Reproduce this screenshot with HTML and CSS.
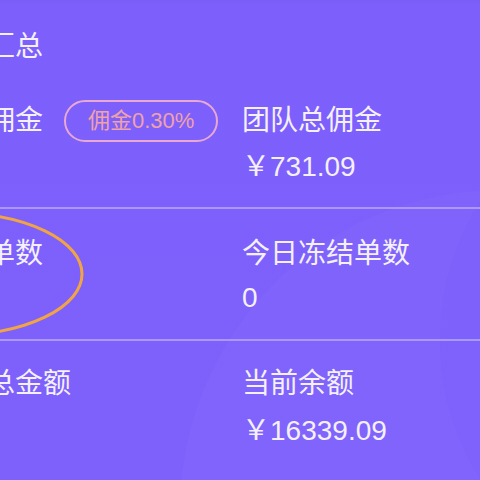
FILE: index.html
```html
<!DOCTYPE html>
<html lang="zh-CN">
<head>
<meta charset="utf-8">
<title>数据汇总</title>
<link rel="stylesheet" href="styles.css">
</head>
<body>
<div class="screen">
  <div class="deco deco-a"></div>
  <div class="deco deco-b"></div>
  <div class="card">
    <div class="title">数据汇总</div>
    <div class="row row-first">
      <div class="cell">
        <div class="label-line">
          <span class="label">今日佣金</span>
          <span class="badge">佣金0.30%</span>
        </div>
        <div class="value"></div>
      </div>
      <div class="cell">
        <div class="label-line"><span class="label">团队总佣金</span></div>
        <div class="value"><span class="yen">￥</span>731.09</div>
      </div>
    </div>
    <div class="row">
      <div class="cell">
        <div class="label-line"><span class="label">今日单数</span></div>
        <div class="value"></div>
      </div>
      <div class="cell">
        <div class="label-line"><span class="label">今日冻结单数</span></div>
        <div class="value">0</div>
      </div>
    </div>
    <div class="row row-last">
      <div class="cell">
        <div class="label-line"><span class="label">累计总金额</span></div>
        <div class="value"></div>
      </div>
      <div class="cell">
        <div class="label-line"><span class="label">当前余额</span></div>
        <div class="value"><span class="yen">￥</span>16339.09</div>
      </div>
    </div>
  </div>
  <svg class="mark" width="480" height="480" viewBox="0 0 480 480">
    <ellipse cx="-45" cy="274" rx="127" ry="61" fill="none" stroke="#f1a444" stroke-width="3"/>
  </svg>
</div>
</body>
</html>
```
FILE: styles.css
```css
html, body {
  margin: 0;
  padding: 0;
}
body {
  width: 480px;
  height: 480px;
  overflow: hidden;
  background: #7c5ffa;
  font-family: "Liberation Sans", "Noto Sans CJK SC", sans-serif;
  color: #f4f0fd;
}
.screen {
  position: relative;
  width: 480px;
  height: 480px;
  overflow: hidden;
  background: linear-gradient(180deg, #7a5df6 0px, #7d5ffb 6px, #7e61fb 100%);
}
.deco {
  position: absolute;
  border-radius: 50%;
  pointer-events: none;
}
.deco-a {
  left: 180px;
  top: 190px;
  width: 640px;
  height: 640px;
  background: rgba(255, 255, 255, 0.018);
}
.deco-b {
  left: 440px;
  top: 80px;
  width: 520px;
  height: 520px;
  background: rgba(120, 92, 250, 0.25);
}
.card {
  position: relative;
  margin-left: -69px;
  width: 622px;
  padding-top: 27px;
}
.title {
  font-size: 28px;
  line-height: 40px;
  height: 40px;
}
.row {
  display: grid;
  grid-template-columns: 311px 311px;
  padding-top: 25px;
  padding-bottom: 21px;
  border-bottom: 2px solid rgba(200, 188, 255, 0.6);
}
.row-first {
  margin-top: 33px;
  padding-top: 0;
  padding-bottom: 23px;
}
.row-first .label-line {
  height: 42px;
}
.row-first .value {
  margin-top: 2px;
}
.row-last {
  padding-top: 23px;
  border-bottom: none;
}
.cell {
  display: flex;
  flex-direction: column;
}
.label-line {
  display: flex;
  align-items: center;
  height: 40px;
}
.label {
  font-size: 28px;
  line-height: 40px;
  white-space: nowrap;
}
.badge {
  margin-left: 21px;
  height: 38px;
  padding: 0 22px;
  border: 2px solid #e8a8cf;
  border-radius: 21px;
  font-size: 22px;
  line-height: 38px;
  color: #efa2a8;
  white-space: nowrap;
}
.value {
  margin-top: 4px;
  font-size: 28px;
  line-height: 40px;
  height: 40px;
  white-space: nowrap;
}
.yen {
  font-family: "Noto Sans CJK SC", sans-serif;
}
.mark {
  position: absolute;
  left: 0;
  top: 0;
  pointer-events: none;
}
```
